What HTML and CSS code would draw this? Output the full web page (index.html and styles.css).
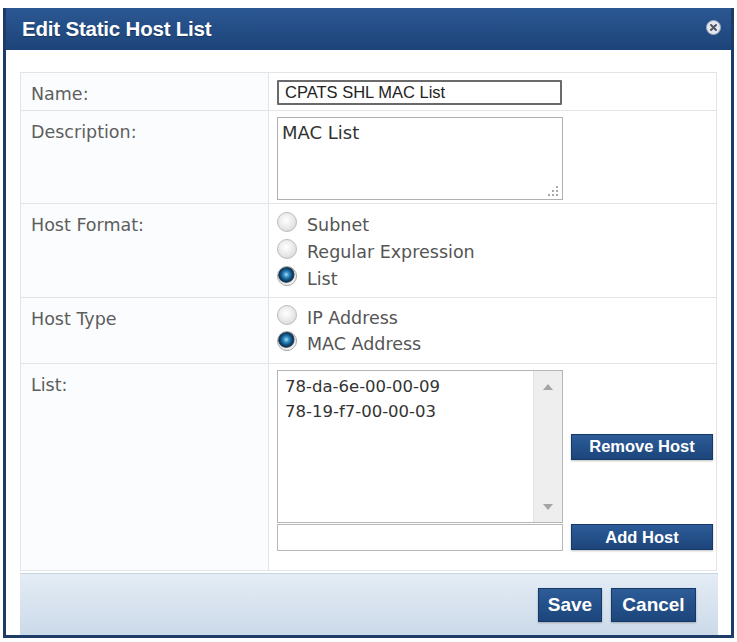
FILE: index.html
```html
<!DOCTYPE html>
<html lang="en">
<head>
  <meta charset="UTF-8" />
  <title>Edit Static Host List</title>
  <link rel="stylesheet" href="styles.css">
</head>
<body>
  <div class="dialog">
    <div class="titlebar">
      <span class="title">Edit Static Host List</span>
      <svg class="close" width="15" height="15" viewBox="0 0 15 15">
        <circle cx="7.5" cy="7.5" r="7" fill="#e4e8ee" stroke="#9aa7b8" stroke-width="1"/>
        <path d="M5 5 L10 10 M10 5 L5 10" stroke="#4a5563" stroke-width="2" stroke-linecap="round"/>
      </svg>
    </div>

    <div class="body">
      <table class="form">
        <tr class="r-name">
          <th>Name:</th>
          <td><input class="text name" type="text" value="CPATS SHL MAC List"></td>
        </tr>
        <tr class="r-desc">
          <th>Description:</th>
          <td>
            <div class="area">MAC List
              <svg class="grip" width="11" height="11" viewBox="0 0 11 11">
                <g fill="#a9a9a9">
                  <rect x="8" y="0" width="2" height="2"/>
                  <rect x="4" y="4" width="2" height="2"/><rect x="8" y="4" width="2" height="2"/>
                  <rect x="0" y="8" width="2" height="2"/><rect x="4" y="8" width="2" height="2"/><rect x="8" y="8" width="2" height="2"/>
                </g>
              </svg>
            </div>
          </td>
        </tr>
        <tr class="r-format">
          <th>Host Format:</th>
          <td class="opts">
            <label class="opt"><input type="radio" name="fmt"><span>Subnet</span></label>
            <label class="opt"><input type="radio" name="fmt"><span>Regular Expression</span></label>
            <label class="opt"><input type="radio" name="fmt" checked><span>List</span></label>
          </td>
        </tr>
        <tr class="r-type">
          <th>Host Type</th>
          <td class="opts">
            <label class="opt"><input type="radio" name="type"><span>IP Address</span></label>
            <label class="opt"><input type="radio" name="type" checked><span>MAC Address</span></label>
          </td>
        </tr>
        <tr class="r-list">
          <th>List:</th>
          <td>
            <div class="listgrid">
              <div class="listbox">
                <div class="items">
                  <div>78-da-6e-00-00-09</div>
                  <div>78-19-f7-00-00-03</div>
                </div>
                <div class="scroll">
                  <svg width="10" height="6" viewBox="0 0 10 6"><polygon points="0,6 5,0 10,6" fill="#a4a4a4"/></svg>
                  <svg width="10" height="6" viewBox="0 0 10 6"><polygon points="0,0 10,0 5,6" fill="#a4a4a4"/></svg>
                </div>
              </div>
              <button class="btn small remove">Remove Host</button>
              <input class="text add" type="text">
              <button class="btn small">Add Host</button>
            </div>
          </td>
        </tr>
      </table>

      <div class="footer">
        <button class="btn big save">Save</button>
        <button class="btn big cancel">Cancel</button>
      </div>
    </div>
  </div>
</body>
</html>
```

FILE: styles.css
```css
html, body {
  margin: 0;
  padding: 0;
  background: #fff;
  font-family: "DejaVu Sans", Verdana, sans-serif;
}

.dialog {
  margin: 8px 0 0 3px;
  width: 731px;
  height: 630px;
  box-sizing: border-box;
  border: 3px solid #1e3c68;
  border-top: 0;
  background: #fff;
  display: flex;
  flex-direction: column;
}

.titlebar {
  height: 42px;
  flex: none;
  background: linear-gradient(#2b5793, #1d4479);
  display: flex;
  align-items: center;
  justify-content: space-between;
  padding: 0 10px 0 16px;
}

.title {
  color: #fff;
  font: bold 20.5px "Liberation Sans", Arial, sans-serif;
  letter-spacing: -0.2px;
  text-shadow: 0 1px 1px rgba(0, 0, 0, 0.3);
}

.close {
  margin-top: -3px;
}

.body {
  flex: 1;
  display: flex;
  flex-direction: column;
  padding: 22px 13px 0 14px;
}

/* form table */
.form {
  width: 697px;
  border-collapse: collapse;
  border: 1px solid #dfe3e8;
}

.form th,
.form td {
  border: 1px solid #e1e5ea;
  vertical-align: top;
  text-align: left;
}

.form th {
  width: 227px;
  padding: 10px 10px 0;
  background: #fbfcfd;
  color: #5e5e5e;
  font-weight: normal;
  font-size: 17.5px;
  line-height: 22px;
}

.form td {
  padding: 6px 3px 0 8px;
}

.r-name { height: 38px; }
.r-desc { height: 93px; }
.r-format { height: 94px; }
.r-type { height: 66px; }
.r-list { height: 207px; }

.text {
  box-sizing: border-box;
  border: 1px solid #b8b8b8;
  background: #fff;
  margin: 0;
  padding: 0 6px;
  color: #222;
  font: 16.5px "Liberation Sans", Arial, sans-serif;
  outline: none;
}

.name {
  width: 285px;
  height: 25px;
  border: 2px solid #6a6a6a;
  border-radius: 1px;
  margin-top: 1px;
}

.area {
  position: relative;
  box-sizing: border-box;
  width: 286px;
  height: 83px;
  border: 1px solid #b0b0b0;
  padding: 3px 4px;
  color: #333;
  font-size: 18px;
  line-height: 24px;
}

.grip {
  position: absolute;
  right: 3px;
  bottom: 2px;
}

/* radios */
.opts {
  padding-top: 7px !important;
}

.opt {
  display: flex;
  align-items: center;
  height: 27px;
  color: #555;
  font-size: 17.5px;
}

.r-type .opt {
  height: 26px;
}

.opt input {
  appearance: none;
  -webkit-appearance: none;
  width: 20px;
  height: 20px;
  margin: 0 10px 6px 0;
  border-radius: 50%;
  border: 1px solid #bdbdbd;
  background: radial-gradient(circle at 45% 40%, #ffffff 0, #ececec 45%, #cfcfcf 100%);
  flex: none;
}

.opt input:checked {
  border-color: #aaa;
  background: radial-gradient(circle at 46% 42%, #a9def5 0, #3a95c6 2.5px, #135a8a 5px, #0b3558 7px, #3b4b5a 7.8px, #dcdcdc 8.5px, #f2f2f2 9.5px);
}

/* list */
.listgrid {
  display: grid;
  grid-template-columns: 286px 142px;
  grid-template-rows: 153px 27px;
  column-gap: 8px;
  row-gap: 1px;
}

.listbox {
  box-sizing: border-box;
  border: 1px solid #b5b5b5;
  display: flex;
}

.items {
  flex: 1;
  padding: 3px 7px;
  color: #333;
  font-size: 16.5px;
  line-height: 25px;
}

.scroll {
  width: 28px;
  background: #eeeeee;
  border-left: 1px solid #e2e2e2;
  display: flex;
  flex-direction: column;
  justify-content: space-between;
  align-items: center;
  padding: 13px 0 12px;
}

.remove {
  align-self: center;
}

.add {
  width: 286px;
  height: 27px;
}

.btn {
  background: linear-gradient(#2d5c98, #1c457b);
  border: 1px solid #163a68;
  color: #fff;
  padding: 0;
  cursor: pointer;
  box-shadow: 0 1px 2px rgba(0, 0, 0, 0.25);
}

.small {
  height: 26px;
  font: bold 16.5px "Liberation Sans", Arial, sans-serif;
}

/* footer */
.footer {
  flex: 1;
  margin-top: 2px;
  background: linear-gradient(#e4ecf5, #cbdae9);
  border-top: 1px solid #c6d3e1;
  display: flex;
  justify-content: flex-end;
  align-items: center;
  gap: 9px;
  padding-right: 22px;
}

.big {
  height: 34px;
  font: bold 19px "Liberation Sans", Arial, sans-serif;
}

.save { width: 64px; }
.cancel { width: 85px; }
```
